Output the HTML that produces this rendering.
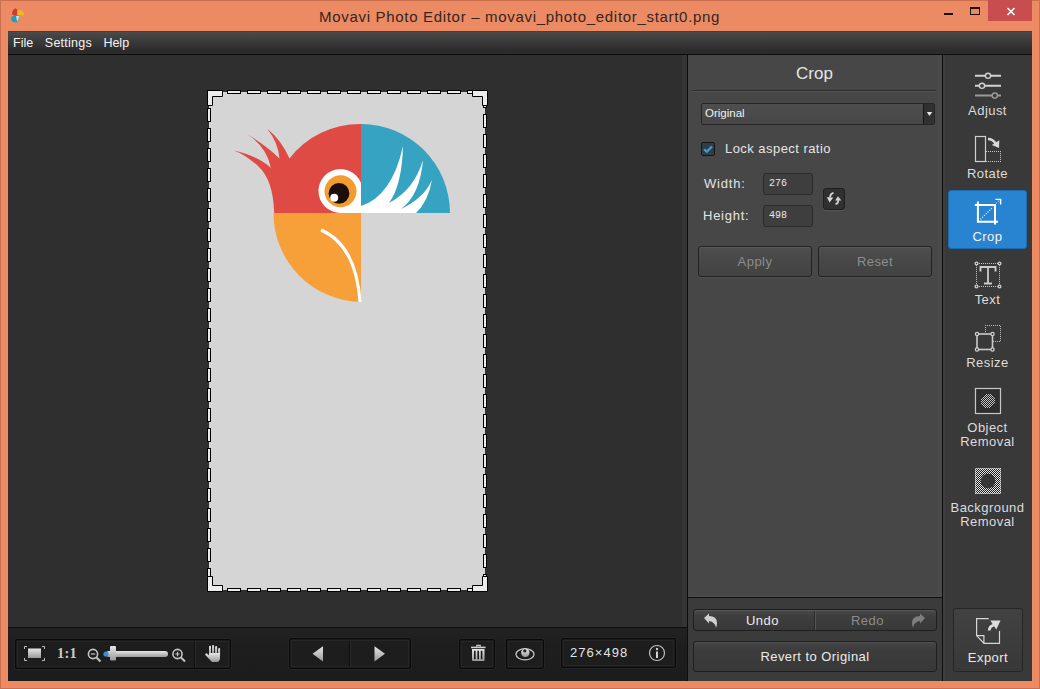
<!DOCTYPE html>
<html><head><meta charset="utf-8">
<style>
*{box-sizing:border-box}
html,body{margin:0;padding:0}
body{width:1040px;height:689px;position:relative;overflow:hidden;background:#ec8b63;font-family:"Liberation Sans",sans-serif}
.a{position:absolute}
.t{position:absolute;white-space:nowrap;line-height:1}
</style></head><body>
<!-- window frame -->
<div class="a" style="left:0;top:0;width:1040px;height:1px;background:#c9714f"></div>
<div class="a" style="left:0;top:0;width:1px;height:689px;background:#c9714f"></div>
<div class="a" style="left:1039px;top:0;width:1px;height:689px;background:#c9714f"></div>
<div class="a" style="left:0;top:688px;width:1040px;height:1px;background:#c9714f"></div>

<!-- title -->
<svg class="a" style="left:8px;top:6px" width="20" height="20" viewBox="8 6 20 20">
 <path d="M12 14.5Q12 9.5 15.5 8.2Q17.5 9 17.8 12L16.5 16Z" fill="#d6372c"/>
 <path d="M17.2 10.5Q22 9.5 24.2 13.5L23.5 15.5L17.5 15Z" fill="#f2b91f"/>
 <path d="M11 19Q11.5 15.5 15 15L19 15.5Q19.5 20 16.5 22.5Q12 22.5 11 19Z" fill="#2c98b8"/>
 <path d="M16 16L19 16Q19 20 17 21.5Z" fill="#bfe8e6"/>
</svg>

<div class="t" style="left:319px;top:9.3px;font-size:15px;letter-spacing:0.69px;color:#33251e">Movavi Photo Editor – movavi_photo_editor_start0.png</div>
<!-- window buttons -->
<div class="a" style="left:944px;top:12.5px;width:8.5px;height:2.5px;background:#1a120e"></div>
<div class="a" style="left:970px;top:7px;width:10px;height:8px;border:1px solid #1a120e;border-top-width:2px"></div>
<div class="a" style="left:988px;top:0;width:44px;height:21px;background:#c84d4f"></div>
<svg class="a" style="left:1006px;top:7px" width="10" height="9" viewBox="0 0 10 9"><path d="M1.5 1L8.5 8M8.5 1L1.5 8" stroke="#fff" stroke-width="1.6"/></svg>

<!-- client -->
<div class="a" style="left:8px;top:31px;width:1024px;height:650px;background:#303030"></div>
<!-- menu -->
<div class="a" style="left:8px;top:31px;width:1024px;height:23px;background:linear-gradient(#3c3c3c 0px,#4a4a4a 1.5px,#3a3a3a 45%,#2a2a2a 90%,#2e2e2e)"></div>
<div class="a" style="left:8px;top:54px;width:1024px;height:1px;background:#0c0c0c"></div>
<div class="t" style="left:13px;top:37px;font-size:12.5px;color:#f4f4f4">File</div>
<div class="t" style="left:44.8px;top:37px;font-size:12.5px;letter-spacing:0.25px;color:#f4f4f4">Settings</div>
<div class="t" style="left:103.4px;top:37px;font-size:12.5px;color:#f4f4f4">Help</div>

<!-- canvas -->
<div class="a" style="left:8px;top:55px;width:679px;height:572px;background:#2f2f2f"></div>
<div class="a" style="left:682px;top:55px;width:5px;height:572px;background:#353535"></div>
<div class="a" style="left:8px;top:627px;width:680px;height:1px;background:#0d0d0d"></div>
<div class="a" style="left:687px;top:55px;width:1px;height:626px;background:#0d0d0d"></div>

<!-- preview image -->
<div class="a" style="left:209px;top:92px;width:276px;height:498px;background:#d5d5d5"></div>
<svg class="a" style="left:0;top:0" width="1040" height="689" viewBox="0 0 1040 689">
 <!-- parrot -->
 <path d="M361 213 L274.2 213 C273.5 190 268 175 258.5 166.4 Q244.6 154.2 233.8 150.5 Q257.7 155.8 270.8 167.9 Q266.8 146.8 247.6 134.5 Q266.5 145.5 279.5 158.5 Q278.2 142.4 267.2 128.7 Q280.9 139.4 289.5 158.5 A89 89 0 0 1 361 124 Z" fill="#df4b44"/>
 <path d="M361 213 L361 302 A89 89 0 0 1 273.5 213 Z" fill="#f7a03a"/>
 <circle cx="340.5" cy="191" r="22" fill="#fff"/>
 <rect x="340.5" y="191" width="20.5" height="22" fill="#fff"/>
 <path d="M361 213 L361 124 A89 89 0 0 1 450 213 Z" fill="#35a3c1"/>
 <path d="M361 213 L361 206 Q392 196 403 146 Q402 185 389 203 Q414 190 423 160 Q420 195 401 209 Q424 198 432 180 Q428 202 416 213 Z" fill="#fff"/>
 <circle cx="340.5" cy="191.3" r="16" fill="#f39c30"/>
 <circle cx="339" cy="193.4" r="10.4" fill="#1b0f0c"/>
 <circle cx="334.2" cy="197.7" r="4" fill="#fff"/>
 <path d="M321 230 Q356 245 360 302" stroke="#fff" stroke-width="3.2" fill="none"/>
 <!-- crop frame -->
 <rect x="209" y="92" width="276" height="498" fill="none" stroke="#000" stroke-width="4" stroke-dasharray="14 6" stroke-dashoffset="2"/>
 <rect x="209" y="92" width="276" height="498" fill="none" stroke="#ebebeb" stroke-width="2" stroke-dasharray="12 8" stroke-dashoffset="1"/>
 <g fill="#ededed" stroke="#000" stroke-width="1">
  <path d="M207.5 90.5 H222.5 V96.5 H212.5 V105.5 H207.5 Z"/>
  <path d="M487.5 90.5 H472.5 V96.5 H482.5 V105.5 H487.5 Z"/>
  <path d="M207.5 591.5 H222.5 V585.5 H212.5 V576.5 H207.5 Z"/>
  <path d="M487.5 591.5 H472.5 V585.5 H482.5 V576.5 H487.5 Z"/>
 </g>
</svg>
<!-- bottom toolbar -->
<div class="a" style="left:8px;top:628px;width:679px;height:53px;background:linear-gradient(#222,#1e1e1e 30%,#1c1c1c)"></div>


<!-- bottom toolbar groups -->
<style>
.grp{position:absolute;border:1px solid #0a0a0a;border-radius:2px;background:#1d1d1d;box-shadow:0 0 0 1px #242424,inset 0 0 0 1px #1a1a1a,inset 0 0 0 2px #262626}
</style>
<div class="grp" style="left:15px;top:639px;width:216px;height:30px"></div>
<div class="a" style="left:194px;top:641px;width:1px;height:26px;background:#111"></div>
<div class="a" style="left:195px;top:641px;width:1px;height:26px;background:#2a2a2a"></div>
<div class="grp" style="left:289px;top:638px;width:122px;height:31px"></div>
<div class="a" style="left:349px;top:641px;width:1px;height:25px;background:#0c0c0c"></div>
<div class="a" style="left:350px;top:641px;width:1px;height:25px;background:#2a2a2a"></div>
<div class="grp" style="left:459px;top:639px;width:36px;height:30px"></div>
<div class="grp" style="left:506px;top:639px;width:38px;height:30px"></div>
<div class="grp" style="left:561px;top:638px;width:115px;height:30px"></div>
<svg class="a" style="left:8px;top:628px" width="679" height="53" viewBox="8 628 679 53">
 <defs>
  <linearGradient id="gg" x1="0" y1="0" x2="0" y2="1"><stop offset="0" stop-color="#e6e6e6"/><stop offset="1" stop-color="#9a9a9a"/></linearGradient>
 </defs>
 <!-- fit icon -->
 <path d="M24.5 649V646.5H27M42 646.5H44.5V649M44.5 658V660.5H42M27 660.5H24.5V658" fill="none" stroke="#bdbdbd" stroke-width="1"/>
 <rect x="28" y="648.5" width="13" height="9.5" fill="url(#gg)"/>
 <!-- zoom out -->
 <circle cx="93" cy="654" r="4.6" fill="none" stroke="#c4c4c4" stroke-width="1.6"/>
 <path d="M90.8 654H95.2" stroke="#c4c4c4" stroke-width="1.2"/>
 <path d="M96.5 657.5L100.5 661.5" stroke="#c4c4c4" stroke-width="2"/>
 <!-- slider -->
 <rect x="106" y="651" width="62" height="6" rx="3" fill="url(#gg)"/>
 <circle cx="106" cy="654" r="2.6" fill="#3a8ddc"/>
 <rect x="110" y="646" width="6" height="14.5" rx="1" fill="url(#gg)"/>
 <!-- zoom in -->
 <circle cx="177.5" cy="654" r="4.6" fill="none" stroke="#c4c4c4" stroke-width="1.6"/>
 <path d="M175.3 654H179.7M177.5 651.8V656.2" stroke="#c4c4c4" stroke-width="1.2"/>
 <path d="M181 657.5L185 661.5" stroke="#c4c4c4" stroke-width="2"/>
 <!-- hand -->
 <g fill="url(#gg)">
  <rect x="209" y="645.8" width="2" height="9" rx="1"/>
  <rect x="212.1" y="645" width="2" height="9" rx="1"/>
  <rect x="215.1" y="646" width="2" height="9" rx="1"/>
  <rect x="218.1" y="648" width="2" height="8" rx="1"/>
  <path d="M209 653H220V658.5Q219.5 662 216.5 662H212L205.3 655Q204.8 653.3 206.6 653.2L209 655.2Z"/>
 </g>
 <!-- nav -->
 <path d="M312.5 653.8L323 646.2V661.5Z" fill="url(#gg)"/>
 <path d="M385 653.8L374.5 646.2V661.5Z" fill="url(#gg)"/>
 <!-- trash -->
 <path d="M476.8 646.8V645.3H480.2V646.8" fill="none" stroke="#c8c8c8" stroke-width="1.2"/>
 <rect x="471" y="646.6" width="14.5" height="1.6" fill="#cfcfcf"/>
 <path d="M472 649H484.5V659.8Q484.5 661 483.3 661H473.2Q472 661 472 659.8Z" fill="url(#gg)"/>
 <path d="M474.8 650.8V659.2M478.2 650.8V659.2M481.6 650.8V659.2" stroke="#1a1a1a" stroke-width="1.6"/>
 <!-- eye -->
 <ellipse cx="525" cy="654.3" rx="9" ry="5.6" fill="none" stroke="#c2c2c2" stroke-width="1.3"/>
 <circle cx="525.3" cy="652.8" r="4.2" fill="url(#gg)"/>
 <circle cx="524.8" cy="650.8" r="1.6" fill="#1c1c1c"/>
 <!-- info -->
 <circle cx="657" cy="653" r="7.5" fill="none" stroke="#bdbdbd" stroke-width="1.2"/>
 <circle cx="657" cy="649" r="1.2" fill="#d0d0d0"/>
 <path d="M657 651.5V658" stroke="#d0d0d0" stroke-width="2"/>
</svg>
<div class="t" style="left:57px;top:646px;font-size:14.5px;font-weight:bold;font-family:'Liberation Serif',serif;letter-spacing:0.2px;color:#cacaca">1:1</div>
<div class="t" style="left:570px;top:646.0px;font-size:13px;letter-spacing:1.05px;color:#e2e2e2">276×498</div>
<!-- right panel -->
<div class="a" style="left:688px;top:55px;width:254px;height:542px;background:#474747"></div>
<div class="a" style="left:937px;top:55px;width:5px;height:542px;background:#4a4a4a"></div>
<div class="a" style="left:688px;top:597px;width:254px;height:1px;background:#0d0d0d"></div>
<div class="a" style="left:688px;top:598px;width:254px;height:83px;background:#3b3b3b"></div>
<div class="a" style="left:942px;top:55px;width:1px;height:626px;background:#0d0d0d"></div>


<!-- crop panel content -->
<div class="t" style="left:796px;top:64.5px;font-size:17px;color:#e6e6e6">Crop</div>
<div class="a" style="left:692px;top:90px;width:244px;height:1px;background:#2b2b2b"></div>
<div class="a" style="left:692px;top:91px;width:244px;height:1px;background:#525252"></div>
<!-- dropdown -->
<div class="a" style="left:701px;top:103px;width:234px;height:22px;border:1px solid #262626;border-radius:2px;background:linear-gradient(#4e4e4e,#474747)"></div>
<div class="a" style="left:923px;top:104px;width:11px;height:20px;background:#303030;border-left:1px solid #161616"></div>
<svg class="a" style="left:926px;top:111px" width="8" height="6"><path d="M0.8 1H6.2L3.5 5Z" fill="#e8e8e8"/></svg>
<div class="t" style="left:705px;top:108px;font-size:11.5px;color:#f0f0f0">Original</div>
<!-- checkbox -->
<div class="a" style="left:701px;top:142px;width:14px;height:14px;border:1px solid #151515;border-radius:2px;background:#2e3e48"></div>
<svg class="a" style="left:701px;top:142px" width="14" height="14"><path d="M3.2 7.3L5.8 9.8L11 4.4" stroke="#4a9ccf" stroke-width="2.2" fill="none"/></svg>
<div class="t" style="left:725px;top:142.0px;font-size:13px;letter-spacing:0.45px;color:#e4e4e4">Lock aspect ratio</div>
<!-- width/height -->
<div class="t" style="left:704px;top:177.2px;font-size:13px;letter-spacing:0.8px;color:#e4e4e4">Width:</div>
<div class="t" style="left:703px;top:209.4px;font-size:13px;letter-spacing:0.75px;color:#e4e4e4">Height:</div>
<div class="a" style="left:763px;top:173px;width:50px;height:22px;border:1px solid #2a2a2a;border-radius:3px;background:#3e3e3e"></div>
<div class="a" style="left:763px;top:205px;width:50px;height:22px;border:1px solid #2a2a2a;border-radius:3px;background:#3e3e3e"></div>
<div class="t" style="left:769px;top:179px;font-size:10px;font-family:'Liberation Mono',monospace;color:#e8e8e8">276</div>
<div class="t" style="left:769px;top:211px;font-size:10px;font-family:'Liberation Mono',monospace;color:#e8e8e8">498</div>
<div class="a" style="left:823px;top:188px;width:22px;height:22px;border:1px solid #1e1e1e;border-radius:3px;background:#303030;box-shadow:0 1px 0 #555"></div>
<svg class="a" style="left:818px;top:183px" width="32" height="32" viewBox="818 183 32 32">
 <path d="M833.5 192.8Q830.3 193.5 830 197.5" stroke="#d8d8d8" stroke-width="1.8" fill="none"/>
 <path d="M826.8 197.2L833.3 197.4L829.6 202.6Z" fill="#d8d8d8"/>
 <path d="M835.5 204.2Q838.5 203.5 838.3 199.5" stroke="#d0d0d0" stroke-width="1.8" fill="none"/>
 <path d="M835 200.6L841.3 200.6L838 196.2Z" fill="#d0d0d0"/>
</svg>
<!-- apply reset -->
<div class="a" style="left:698px;top:246px;width:114px;height:31px;border:1px solid #222;border-radius:3px;background:linear-gradient(#4f4f4f,#484848 40%,#434343);box-shadow:inset 0 1px 0 #5a5a5a,0 1px 0 #505050"></div>
<div class="a" style="left:818px;top:246px;width:114px;height:31px;border:1px solid #222;border-radius:3px;background:linear-gradient(#4f4f4f,#484848 40%,#434343);box-shadow:inset 0 1px 0 #5a5a5a,0 1px 0 #505050"></div>
<div class="t" style="left:698px;top:255.3px;width:114px;text-align:center;font-size:13px;letter-spacing:0.45px;color:#8e8e8e">Apply</div>
<div class="t" style="left:818px;top:255.3px;width:114px;text-align:center;font-size:13px;letter-spacing:0.45px;color:#8e8e8e">Reset</div>
<div class="a" style="left:689px;top:596px;width:253px;height:1px;background:#505050"></div>

<!-- undo redo revert -->
<div class="a" style="left:693px;top:609px;width:244px;height:22px;border:1px solid #1f1f1f;border-radius:3px;background:linear-gradient(#4a4a4a,#3e3e3e 30%,#383838);box-shadow:inset 0 1px 0 #565656"></div>
<div class="a" style="left:815px;top:611px;width:1px;height:19px;background:#555"></div>
<div class="a" style="left:814px;top:611px;width:1px;height:19px;background:#2a2a2a"></div>
<div class="t" style="left:746px;top:614.0px;font-size:13px;letter-spacing:0.45px;color:#ececec">Undo</div>
<div class="t" style="left:851px;top:614.0px;font-size:13px;letter-spacing:0.45px;color:#8c8c8c">Redo</div>
<svg class="a" style="left:702px;top:612px" width="18" height="18" viewBox="0 0 18 18"><path d="M2 6L7 1.5V4Q15 4 15 11Q15 14 14 15.5Q13 10 7 9V11.5Z" fill="#cfcfcf"/></svg>
<svg class="a" style="left:909px;top:612px" width="18" height="18" viewBox="0 0 18 18"><path d="M16 6L11 1.5V4Q3 4 3 11Q3 14 4 15.5Q5 10 11 9V11.5Z" fill="#7e7e7e"/></svg>
<div class="a" style="left:693px;top:641px;width:244px;height:31px;border:1px solid #1f1f1f;border-radius:3px;background:linear-gradient(#454545,#3c3c3c 30%,#383838);box-shadow:inset 0 1px 0 #505050"></div>
<div class="t" style="left:693px;top:650.2px;width:244px;text-align:center;font-size:13px;letter-spacing:0.45px;color:#ececec">Revert to Original</div>
<!-- sidebar -->
<div class="a" style="left:943px;top:55px;width:89px;height:626px;background:#393939"></div>
<div class="a" style="left:943px;top:55px;width:2px;height:626px;background:#3f3f3f"></div>


<!-- sidebar items -->
<svg class="a" style="left:943px;top:55px" width="89" height="626" viewBox="943 55 89 626">
 <!-- adjust -->
 <g stroke="#d2d2d2" stroke-width="2" fill="none">
  <path d="M975 75.8H985M991 75.8H1001"/>
  <circle cx="988" cy="75.8" r="2.6" stroke-width="1.4"/>
  <path d="M975 85.8H979M985 85.8H1001"/>
  <circle cx="982" cy="85.8" r="2.6" stroke-width="1.4"/>
 </g>
 <g stroke="#9a9a9a" stroke-width="2" fill="none">
  <path d="M975 95.6H992M997.6 95.6H1001"/>
  <circle cx="994.8" cy="95.6" r="2.6" stroke-width="1.4"/>
 </g>
 <!-- rotate -->
 <rect x="975.5" y="136.5" width="10" height="25" fill="none" stroke="#cfcfcf" stroke-width="1.2"/>
 <path d="M986 151.5H1000.5V161.5H986" fill="none" stroke="#c8c8c8" stroke-width="1" stroke-dasharray="1 1" shape-rendering="crispEdges"/>
 <path d="M988 139Q993 139 996 144" fill="none" stroke="#d8d8d8" stroke-width="2.6"/>
 <path d="M991.8 145L999.3 140.2L999 148Z" fill="#d8d8d8"/>
</svg>
<!-- crop selected -->
<div class="a" style="left:948px;top:190px;width:79px;height:59px;border-radius:3px;background:#2884d0;border:1px solid #1f6bb0"></div>
<svg class="a" style="left:943px;top:55px" width="89" height="626" viewBox="943 55 89 626">
 <g stroke="#fff" fill="none">
  <path d="M977.9 201.5V221.8H998" stroke-width="2"/>
  <path d="M974.8 205H995V224.5" stroke-width="2"/>
  <path d="M980.5 219.5L993 207" stroke-width="1.1" stroke-dasharray="1.1 1.4"/>
  <path d="M996.3 203.3L1000 199.8" stroke-width="1" stroke-dasharray="1.1 1.4"/>
  <path d="M995.5 199.4H1000.6V204.5" stroke-width="1.4"/>
 </g>
 <!-- text icon -->
 <rect x="976.5" y="263.5" width="23" height="23" fill="none" stroke="#c4c4c4" stroke-width="1" stroke-dasharray="1 1" shape-rendering="crispEdges"/>
 <g fill="#2e2e2e" stroke="#d0d0d0" stroke-width="1.3"><circle cx="976.5" cy="263.5" r="1.4"/><circle cx="999.5" cy="263.5" r="1.4"/><circle cx="976.5" cy="286.5" r="1.4"/><circle cx="999.5" cy="286.5" r="1.4"/></g>
 <path d="M980.5 271.5V267H995.5V271.5" fill="none" stroke="#cacaca" stroke-width="2"/>
 <path d="M988 267V283.5" fill="none" stroke="#cacaca" stroke-width="1.8"/>
 <path d="M984 283.5H992" fill="none" stroke="#cacaca" stroke-width="2"/>
 <!-- resize -->
 <path d="M985 332V325.5H1000.5V341H993" fill="none" stroke="#bdbdbd" stroke-width="1" stroke-dasharray="1 1" shape-rendering="crispEdges"/>
 <rect x="977" y="334" width="15.5" height="15.5" fill="none" stroke="#cacaca" stroke-width="1.6"/>
 <g fill="#2e2e2e" stroke="#d0d0d0" stroke-width="1.3"><circle cx="977" cy="334" r="1.6"/><circle cx="992.5" cy="334" r="1.6"/><circle cx="977" cy="349.5" r="1.6"/><circle cx="992.5" cy="349.5" r="1.6"/></g>
 <!-- object removal -->
 <defs>
  <pattern id="chk" x="0" y="0" width="2" height="2" patternUnits="userSpaceOnUse"><rect x="0" y="0" width="1" height="1" fill="#e8e8e8"/><rect x="1" y="1" width="1" height="1" fill="#e8e8e8"/><rect x="1" y="0" width="1" height="1" fill="#1a1a1a"/><rect x="0" y="1" width="1" height="1" fill="#1a1a1a"/></pattern>
 </defs>
 <rect x="975.5" y="388.5" width="25" height="25" fill="#2f2f2f" stroke="#c8c8c8" stroke-width="1.2"/>
 <circle cx="988" cy="401" r="7" fill="url(#chk)" opacity="0.8" shape-rendering="crispEdges"/>
 <!-- background removal -->
 <rect x="975" y="468" width="26" height="26" fill="url(#chk)" shape-rendering="crispEdges"/>
 <rect x="975.5" y="468.5" width="25" height="25" fill="none" stroke="#cfcfcf" stroke-width="1" opacity="0.6"/>
 <circle cx="988" cy="481" r="7.3" fill="#363636"/>
</svg>
<div class="t" style="left:943px;top:104.2px;width:89px;text-align:center;font-size:13px;letter-spacing:0.45px;color:#dcdcdc">Adjust</div>
<div class="t" style="left:943px;top:167.2px;width:89px;text-align:center;font-size:13px;letter-spacing:0.45px;color:#dcdcdc">Rotate</div>
<div class="t" style="left:943px;top:229.9px;width:89px;text-align:center;font-size:13px;letter-spacing:0.45px;color:#f4f4f4">Crop</div>
<div class="t" style="left:943px;top:292.8px;width:89px;text-align:center;font-size:13px;letter-spacing:0.45px;color:#dcdcdc">Text</div>
<div class="t" style="left:943px;top:355.8px;width:89px;text-align:center;font-size:13px;letter-spacing:0.45px;color:#dcdcdc">Resize</div>
<div class="t" style="left:943px;top:420.8px;width:89px;text-align:center;font-size:13px;letter-spacing:0.45px;color:#dcdcdc">Object</div>
<div class="t" style="left:943px;top:435.2px;width:89px;text-align:center;font-size:13px;letter-spacing:0.45px;color:#dcdcdc">Removal</div>
<div class="t" style="left:943px;top:501.2px;width:89px;text-align:center;font-size:13px;letter-spacing:0.45px;color:#dcdcdc">Background</div>
<div class="t" style="left:943px;top:515.4px;width:89px;text-align:center;font-size:13px;letter-spacing:0.45px;color:#dcdcdc">Removal</div>
<!-- export -->
<div class="a" style="left:953px;top:608px;width:70px;height:64px;border:1px solid #262626;border-radius:3px;background:linear-gradient(#424242,#383838)"></div>
<svg class="a" style="left:943px;top:55px" width="89" height="626" viewBox="943 55 89 626">
 <path d="M988.7 618.6H976.6V635.6L984 643.4H999.5V631" fill="none" stroke="#d6d6d6" stroke-width="1.2"/>
 <path d="M976.6 635.6H983.9V643.4" fill="none" stroke="#d6d6d6" stroke-width="1.2"/>
 <path d="M990.3 620.6L1000.5 620.6L996.3 629.5Z" fill="#dcdcdc"/>
 <path d="M989.2 630.5Q989.5 625.8 994.5 624.8" fill="none" stroke="#dcdcdc" stroke-width="2.8"/>
</svg>
<div class="t" style="left:953px;top:651.0px;width:70px;text-align:center;font-size:13px;letter-spacing:0.45px;color:#eaeaea">Export</div>
</body></html>
